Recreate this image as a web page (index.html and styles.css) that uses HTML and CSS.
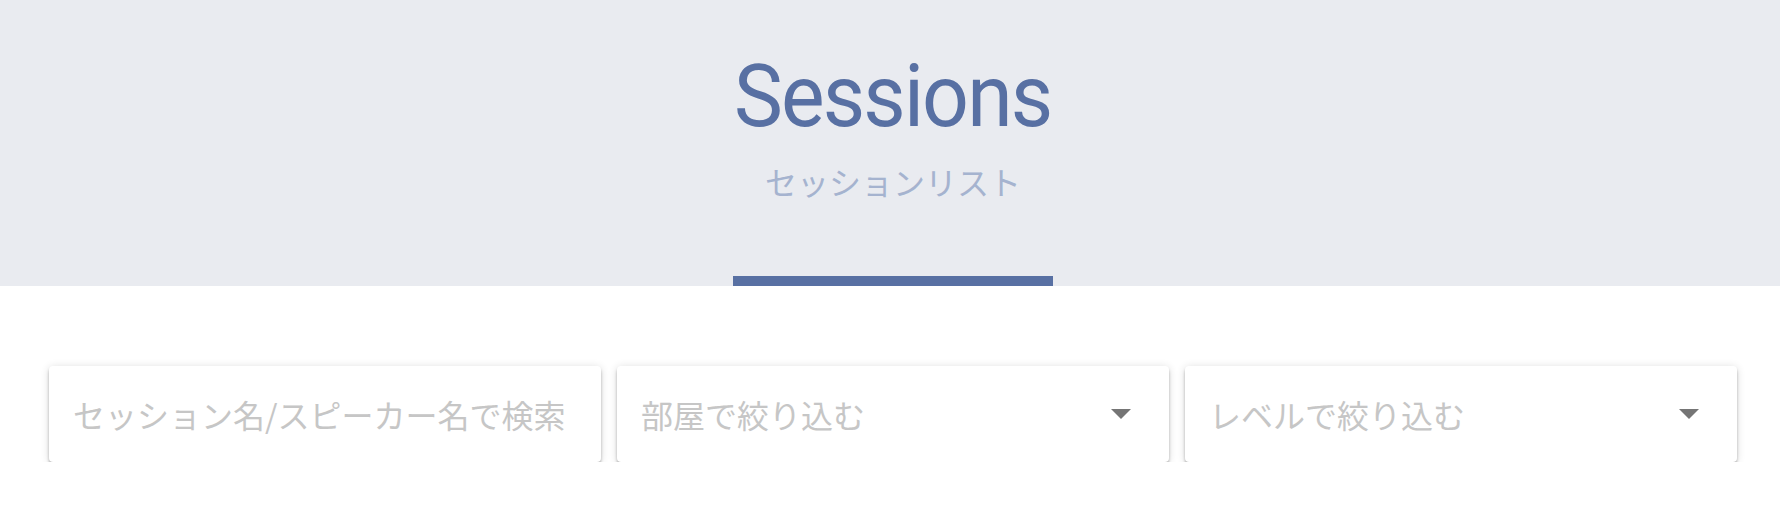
FILE: index.html
```html
<!DOCTYPE html>
<html lang="ja">
<head>
<meta charset="utf-8">
<title>Sessions</title>
<link rel="stylesheet" href="styles.css">
</head>
<body>
<header class="hero">
  <h1 class="hero-title">Sessions</h1>
  <p class="hero-sub">セッションリスト</p>
  <div class="hero-bar"></div>
</header>
<main class="filters">
  <div class="field">
    <input class="field-input" type="text" placeholder="セッション名/スピーカー名で検索">
  </div>
  <div class="field field-select">
    <span class="field-label">部屋で絞り込む</span>
    <span class="caret"></span>
  </div>
  <div class="field field-select">
    <span class="field-label">レベルで絞り込む</span>
    <span class="caret"></span>
  </div>
</main>
</body>
</html>
```
FILE: styles.css
```css
html, body {
  margin: 0;
  padding: 0;
  background: #ffffff;
}
body {
  font-family: "Noto Sans CJK JP", "Noto Sans", sans-serif;
}
.hero {
  height: 286px;
  background: #e9ebf0;
  display: flex;
  flex-direction: column;
  align-items: center;
  padding-left: 6px;
  box-sizing: border-box;
}
.hero-title {
  margin: 52px 0 0;
  font-family: Roboto, "Liberation Sans", sans-serif;
  font-weight: 400;
  font-size: 88px;
  line-height: 88px;
  color: #5870a3;
  letter-spacing: -2px;
  transform: scaleX(0.935);
}
.hero-sub {
  margin: 25px 0 0;
  font-size: 32px;
  line-height: 32px;
  color: #a5b3cf;
  font-weight: 400;
}
.hero-bar {
  margin-top: auto;
  width: 320px;
  height: 10px;
  background: #5870a3;
}
.filters {
  display: grid;
  grid-template-columns: repeat(3, minmax(0, 1fr));
  gap: 16px;
  padding: 80px 43px 0 49px;
}
.field {
  min-width: 0;
  height: 96px;
  background: #ffffff;
  border-radius: 4px;
  box-shadow: 0 3px 3px rgba(0,0,0,.26), 0 5px 2px -3px rgba(0,0,0,.16), 0 1px 8px rgba(0,0,0,.14);
  display: flex;
  align-items: center;
  padding: 0 24px;
  box-sizing: border-box;
}
.field-select {
  padding-right: 38px;
}
.field-input {
  width: 100%;
  min-width: 0;
  border: 0;
  outline: none;
  background: transparent;
  padding: 0;
  font-family: "Noto Sans CJK JP", sans-serif;
  font-size: 32px;
  color: #333;
}
.field-input::placeholder {
  color: #c6c6c6;
  opacity: 1;
}
.field-label {
  flex: 1;
  font-size: 32px;
  color: #c6c6c6;
}
.caret {
  width: 0;
  height: 0;
  border-left: 10px solid transparent;
  border-right: 10px solid transparent;
  border-top: 10px solid #757575;
}
```
